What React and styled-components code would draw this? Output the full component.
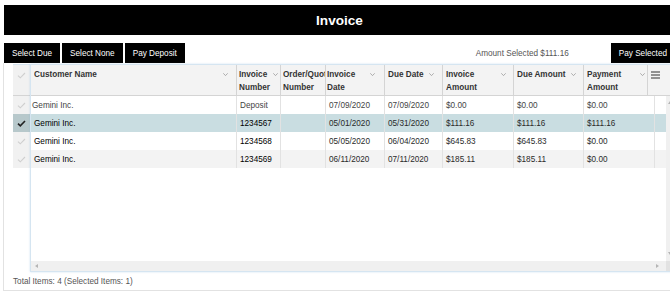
import styled, { createGlobalStyle } from "styled-components";

const GlobalStyle = createGlobalStyle`
  html, body {
    margin: 0;
    padding: 0;
    overflow: hidden;
    background: #fff;
  }
  body {
    font-family: "Liberation Sans", Arial, sans-serif;
    font-size: 8.2px;
    color: #333;
  }
`;

const Page = styled.div`
  width: 670px;
  height: 293px;
  overflow: hidden;
`;

const TitleBar = styled.div`
  margin: 5px 0 0 4px;
  height: 30px;
  background: #000;
  color: #fff;
  font-size: 13.6px;
  font-weight: bold;
  display: flex;
  align-items: center;
  justify-content: center;
  padding-left: 5px;
`;

const Toolbar = styled.div`
  display: flex;
  align-items: center;
  gap: 2px;
  margin: 8px 0 0 4px;
  width: 671px;
  height: 20px;
`;

const Button = styled.button`
  height: 20px;
  padding: 0 8px;
  border: 0;
  background: #000;
  color: #fff;
  font-family: inherit;
  font-size: 8.2px;
  flex-shrink: 0;
  cursor: pointer;
`;

const AmountText = styled.span`
  margin-left: auto;
  margin-right: 40px;
  color: #555;
`;

const Panel = styled.div`
  margin-left: 3px;
  width: 662px;
  border: 1px solid #e2e2e2;
  border-top: 0;
  padding: 1px 1px 0 9px;
`;

const Grid = styled.div`
  display: flex;
`;

const SelectionColumn = styled.div`
  width: 17px;
  display: flex;
  flex-direction: column;
`;

const SelectCell = styled.div`
  box-sizing: border-box;
  height: ${(p) => (p.$header ? "32px" : "18px")};
  background: ${(p) => (p.$selected ? "#b7c8cb" : "#f1f1f1")};
  border-top: ${(p) => (p.$header ? "1px solid #d5e5f1" : "0")};
  border-bottom: ${(p) => (p.$header ? "1px solid #d4d4d4" : "0")};
  display: flex;
  align-items: ${(p) => (p.$header ? "flex-start" : "center")};
  justify-content: center;
  padding-top: ${(p) => (p.$header ? "7px" : "0")};
`;

const Main = styled.div`
  flex: 1;
  border: 1px solid #d5e5f1;
  box-shadow: 0 0 2px rgba(120, 170, 220, 0.35);
  display: flex;
  flex-direction: column;
`;

const HeaderRow = styled.div`
  display: flex;
  box-sizing: border-box;
  height: 31px;
  background: #f3f3f3;
  border-bottom: 1px solid #d4d4d4;
`;

const HeaderCell = styled.div`
  width: ${(p) => p.$w}px;
  flex-shrink: 0;
  box-sizing: border-box;
  border-right: 1px solid #d4d4d4;
  display: flex;
  align-items: flex-start;
  padding: 3px ${(p) => p.$gap}px 0 ${(p) => p.$padLeft}px;
  overflow: hidden;
  font-weight: bold;
  line-height: 13px;
  color: #333;
`;

const HeaderLabel = styled.div`
  flex: 1;
  min-width: 0;
  overflow: hidden;
`;

const SortArrow = styled.svg`
  flex-shrink: 0;
  margin-top: 5px;
  margin-left: 1px;
`;

const MenuCell = styled.div`
  width: 15px;
  flex-shrink: 0;
  display: flex;
  justify-content: center;
  padding-top: 6px;
  box-sizing: border-box;
`;

const BodyArea = styled.div`
  display: flex;
  height: 165px;
`;

const Viewport = styled.div`
  flex: 1;
  background: #fff;
`;

const Row = styled.div`
  display: flex;
  height: 18px;
  background: ${(p) => (p.$selected ? "#c9dde1" : p.$alt ? "#f3f3f3" : "#fff")};
  color: ${(p) => (p.$light ? "#444" : "#2a2a2a")};
`;

const Cell = styled.div`
  width: ${(p) => p.$w}px;
  flex-shrink: 0;
  box-sizing: border-box;
  border-right: 1px solid #e2e2e2;
  padding-left: ${(p) => p.$pad}px;
  display: flex;
  align-items: center;
  white-space: nowrap;
  overflow: hidden;
  color: ${(p) => (p.$strong ? "#000" : "inherit")};
`;

const VScroll = styled.div`
  width: 8px;
  background: #f0f0f0;
  display: flex;
  flex-direction: column;
  justify-content: space-between;
  align-items: center;
  padding: 5px 0;
  box-sizing: border-box;
`;

const HScrollRow = styled.div`
  display: flex;
  height: 10px;
`;

const HScroll = styled.div`
  flex: 1;
  background: #f0f0f0;
  display: flex;
  justify-content: space-between;
  align-items: center;
  padding: 0 6px 0 4px;
`;

const Corner = styled.div`
  width: 8px;
  background: #e2e2e2;
`;

const Footer = styled.div`
  height: 18px;
  display: flex;
  align-items: center;
  color: #555;
`;

const columns = [
  { key: "customer", label: "Customer Name", w: 206, gap: 8, padLeft: 3 },
  { key: "number", label: "Invoice Number", w: 44, gap: 2, padLeft: 2 },
  { key: "order", label: "Order/Quote Number", w: 45, gap: 0, padLeft: 2, noArrow: true },
  { key: "invDate", label: "Invoice Date", w: 59, gap: 9, padLeft: 1 },
  { key: "dueDate", label: "Due Date", w: 58, gap: 8, padLeft: 3 },
  { key: "invAmt", label: "Invoice Amount", w: 71, gap: 7, padLeft: 3 },
  { key: "dueAmt", label: "Due Amount", w: 70, gap: 7, padLeft: 3 },
  { key: "payAmt", label: "Payment Amount", w: 64, gap: 2, padLeft: 3 },
];

const rows = [
  { customer: "Gemini Inc.", number: "Deposit", order: "", invDate: "07/09/2020", dueDate: "07/09/2020", invAmt: "$0.00", dueAmt: "$0.00", payAmt: "$0.00", first: true },
  { customer: "Gemini Inc.", number: "1234567", order: "", invDate: "05/01/2020", dueDate: "05/31/2020", invAmt: "$111.16", dueAmt: "$111.16", payAmt: "$111.16", selected: true },
  { customer: "Gemini Inc.", number: "1234568", order: "", invDate: "05/05/2020", dueDate: "06/04/2020", invAmt: "$645.83", dueAmt: "$645.83", payAmt: "$0.00" },
  { customer: "Gemini Inc.", number: "1234569", order: "", invDate: "06/11/2020", dueDate: "07/11/2020", invAmt: "$185.11", dueAmt: "$185.11", payAmt: "$0.00", alt: true },
];

function Check({ dark }) {
  return (
    <svg width="9" height="7" viewBox="0 0 9 7">
      <path d="M1 3.6 L3.3 5.8 L8 1" fill="none" stroke={dark ? "#222" : "#cfcfcf"} strokeWidth={dark ? 1.6 : 1.1} />
    </svg>
  );
}

function Chevron() {
  return (
    <SortArrow width="5" height="3" viewBox="0 0 5 3">
      <path d="M0.3 0.3 L2.5 2.6 L4.7 0.3" fill="none" stroke="#9a9a9a" strokeWidth="0.8" />
    </SortArrow>
  );
}

function MenuIcon() {
  return (
    <svg width="9" height="8" viewBox="0 0 9 8">
      <path d="M0 1 H9 M0 4 H9 M0 7 H9" stroke="#333" strokeWidth="1.1" />
    </svg>
  );
}

function Tri({ dir }) {
  const d = {
    up: "M0 3 L2 0 L4 3 Z",
    down: "M0 0 L4 0 L2 3 Z",
    left: "M3 0 L3 4 L0 2 Z",
    right: "M0 0 L3 2 L0 4 Z",
  }[dir];
  return (
    <svg width="4" height="4" viewBox="0 0 4 4">
      <path d={d} fill="#b5b5b5" />
    </svg>
  );
}

export default function App() {
  const bodyWidths = columns.map((c) => (c.key === "payAmt" ? 71 : c.w));
  return (
    <>
      <GlobalStyle />
      <Page>
        <TitleBar>Invoice</TitleBar>
        <Toolbar>
          <Button>Select Due</Button>
          <Button>Select None</Button>
          <Button>Pay Deposit</Button>
          <AmountText>Amount Selected $111.16</AmountText>
          <Button>Pay Selected</Button>
        </Toolbar>
        <Panel>
          <Grid>
            <SelectionColumn>
              <SelectCell $header>
                <Check />
              </SelectCell>
              {rows.map((r, i) => (
                <SelectCell key={i} $selected={r.selected}>
                  <Check dark={r.selected} />
                </SelectCell>
              ))}
            </SelectionColumn>
            <Main>
              <HeaderRow>
                {columns.map((c) => (
                  <HeaderCell key={c.key} $w={c.w} $gap={c.gap} $padLeft={c.padLeft}>
                    <HeaderLabel>{c.label}</HeaderLabel>
                    {!c.noArrow && <Chevron />}
                  </HeaderCell>
                ))}
                <MenuCell>
                  <MenuIcon />
                </MenuCell>
              </HeaderRow>
              <BodyArea>
                <Viewport>
                  {rows.map((r, i) => (
                    <Row key={i} $selected={r.selected} $alt={r.alt} $light={r.first}>
                      {columns.map((c, j) => (
                        <Cell
                          key={c.key}
                          $w={bodyWidths[j]}
                          $pad={c.key === "customer" && r.first ? 1 : 3}
                          $strong={!r.first && (c.key === "number" || c.key === "customer")}
                        >
                          {r[c.key]}
                        </Cell>
                      ))}
                    </Row>
                  ))}
                </Viewport>
                <VScroll>
                  <Tri dir="up" />
                  <Tri dir="down" />
                </VScroll>
              </BodyArea>
              <HScrollRow>
                <HScroll>
                  <Tri dir="left" />
                  <Tri dir="right" />
                </HScroll>
                <Corner />
              </HScrollRow>
            </Main>
          </Grid>
          <Footer>Total Items: 4 (Selected Items: 1)</Footer>
        </Panel>
      </Page>
    </>
  );
}
